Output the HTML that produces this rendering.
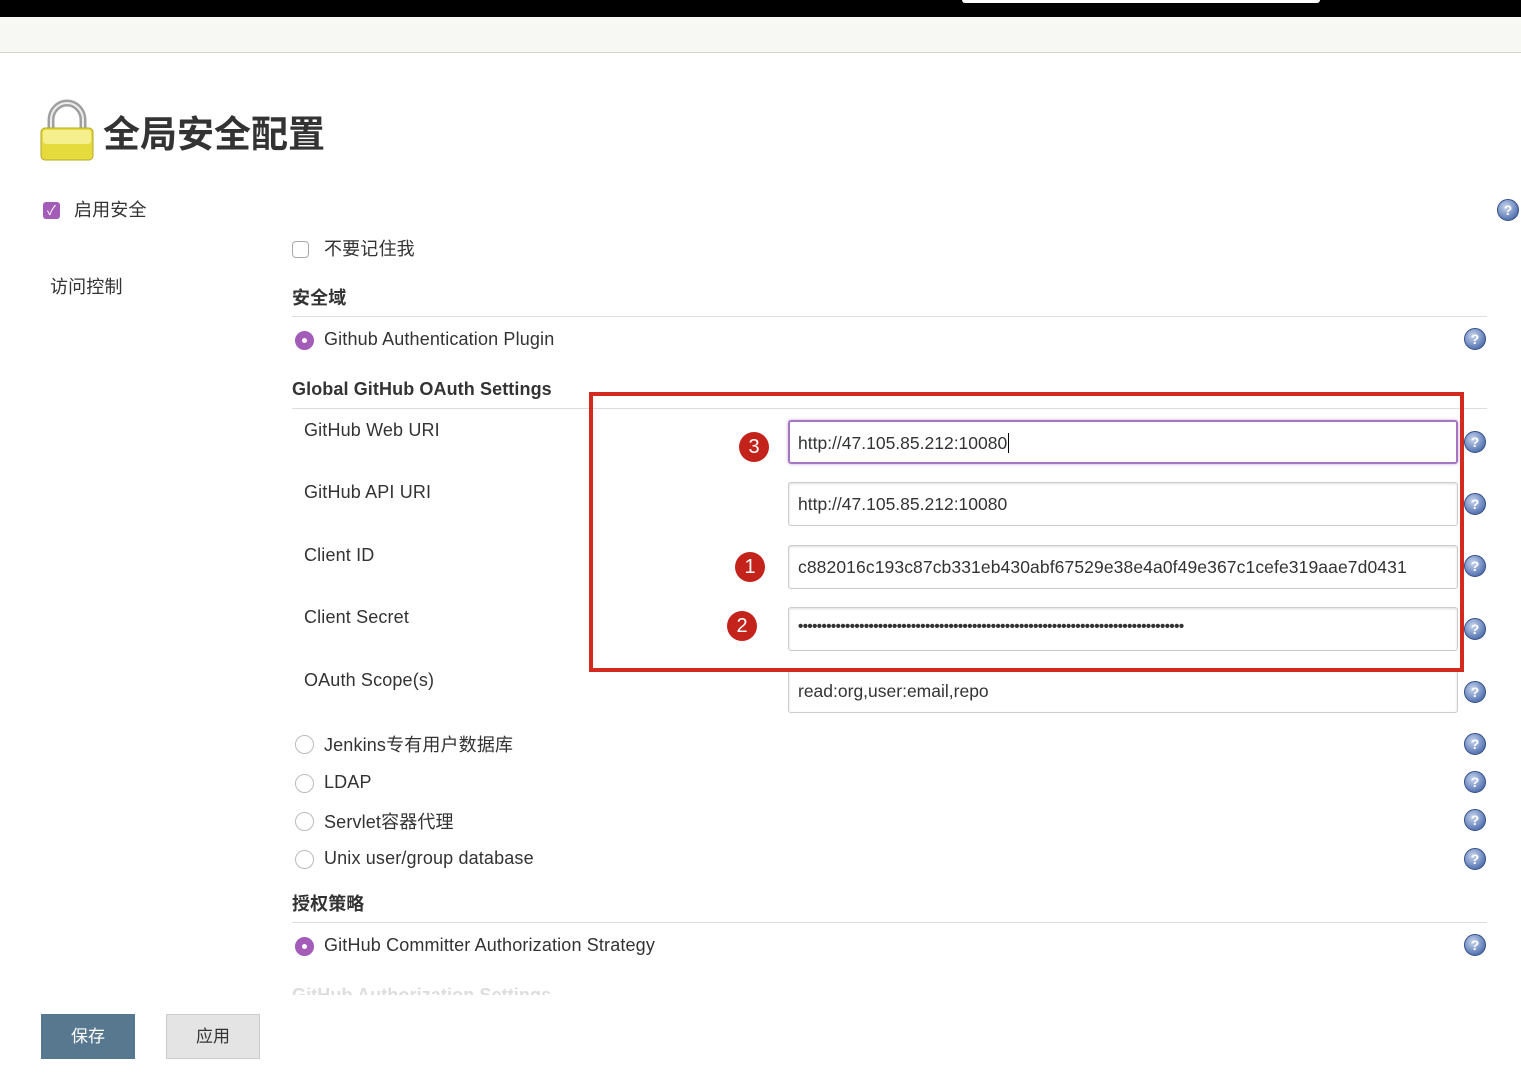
<!DOCTYPE html>
<html><head><meta charset="utf-8"><style>
*{margin:0;padding:0;box-sizing:border-box}
body{width:1521px;height:1080px;overflow:hidden;background:#fff;font-family:"Liberation Sans","Noto Sans CJK SC",sans-serif;color:#333;position:relative}
.a{position:absolute;white-space:nowrap}
.t{font-size:18px;letter-spacing:0.15px}
.h{font-size:18px;font-weight:bold;letter-spacing:0.1px}
.line{position:absolute;height:1px;background:#ddd}
.inp{position:absolute;left:788px;width:670px;height:44px;border:1px solid #ccc;border-radius:3px;font-size:17.5px;padding:11px 9px;box-shadow:inset 0 1px 2px #ddd}
.q{position:absolute;width:22px;height:22px;border-radius:50%;background:radial-gradient(circle at 40% 35%,#c8d6ee,#5a78b4 70%,#3a5590);border:1px solid #34508a;color:#fff;font:bold 14px "Liberation Sans",sans-serif;text-align:center;line-height:20px}
.rad{position:absolute;width:19px;height:19px;border-radius:50%;border:1px solid #bbb;background:#fff}
.rad.on{background:#a35cb8;border-color:#a35cb8}
.rad.on::after{content:"";position:absolute;left:6px;top:6px;width:5px;height:5px;border-radius:50%;background:#fff}
.num{position:absolute;width:30px;height:30px;border-radius:50%;background:#c4231c;color:#fff;font:20px "Liberation Sans",sans-serif;text-align:center;line-height:30px}
</style></head><body>
<div class="a" style="left:0;top:0;width:1521px;height:17px;background:#000"></div>
<div class="a" style="left:962px;top:0;width:358px;height:3px;background:#fff;border-radius:0 0 3px 3px"></div>
<div class="a" style="left:0;top:17px;width:1521px;height:36px;background:#f7f8f3;border-bottom:1px solid #d8d8d0"></div>

<svg class="a" style="left:36px;top:98px" width="62" height="66" viewBox="0 0 62 66">
<path d="M15 36 V22 a16 17 0 0 1 32 0 V36" fill="none" stroke="#a0a0a0" stroke-width="7"/>
<path d="M15 36 V22 a16 17 0 0 1 32 0 V36" fill="none" stroke="#eee" stroke-width="2"/>
<rect x="5" y="30" width="52" height="32" rx="4" fill="#e6db3c" stroke="#b5a82a"/>
<rect x="7" y="32" width="48" height="14" rx="3" fill="#f6ef8e"/>
</svg>
<div class="a" style="left:103px;top:104px;font-size:37px;font-weight:bold;color:#333">全局安全配置</div>

<div class="a" style="left:43px;top:202px;width:17px;height:17px;border-radius:3px;background:#a35cb8;color:#fff;font-size:13px;text-align:center;line-height:17px">✓</div>
<div class="a t" style="left:74px;top:196px">启用安全</div>
<div class="q" style="left:1497px;top:199px">?</div>

<div class="a" style="left:292px;top:241px;width:17px;height:17px;border-radius:4px;border:1px solid #aaa"></div>
<div class="a t" style="left:324px;top:235px">不要记住我</div>
<div class="a t" style="left:50px;top:273px">访问控制</div>

<div class="a h" style="left:292px;top:284px">安全域</div>
<div class="line" style="left:292px;top:316px;width:1195px"></div>
<div class="rad on" style="left:295px;top:331px"></div>
<div class="a t" style="left:324px;top:329px">Github Authentication Plugin</div>
<div class="q" style="left:1464px;top:328px">?</div>

<div class="a h" style="left:292px;top:379px">Global GitHub OAuth Settings</div>
<div class="line" style="left:292px;top:408px;width:1195px"></div>

<div class="a t" style="left:304px;top:420px">GitHub Web URI</div>
<div class="a t" style="left:304px;top:482px">GitHub API URI</div>
<div class="a t" style="left:304px;top:545px">Client ID</div>
<div class="a t" style="left:304px;top:607px">Client Secret</div>
<div class="a t" style="left:304px;top:670px">OAuth Scope(s)</div>

<div class="inp" style="top:420px;border:2px solid #a577c2;box-shadow:0 0 3px #c9a6dc;padding-left:8px">http://47.105.85.212:10080<span style="border-left:1px solid #000;margin-left:1px"></span></div>
<div class="inp" style="top:482px">http://47.105.85.212:10080</div>
<div class="inp" style="top:545px;letter-spacing:0.1px">c882016c193c87cb331eb430abf67529e38e4a0f49e367c1cefe319aae7d0431</div>
<div class="inp" style="top:607px;font-size:15px;font-weight:bold;padding-top:10px;letter-spacing:-0.55px">••••••••••••••••••••••••••••••••••••••••••••••••••••••••••••••••••••••••••••••••••</div>
<div class="inp" style="top:670px;height:43px;border-top:none">read:org,user:email,repo</div>

<div class="q" style="left:1464px;top:431px">?</div>
<div class="q" style="left:1464px;top:493px">?</div>
<div class="q" style="left:1464px;top:555px">?</div>
<div class="q" style="left:1464px;top:618px">?</div>
<div class="q" style="left:1464px;top:681px">?</div>

<div class="a" style="left:589px;top:392px;width:875px;height:280px;border:4px solid #d32a20"></div>
<div class="num" style="left:739px;top:432px">3</div>
<div class="num" style="left:735px;top:552px">1</div>
<div class="num" style="left:727px;top:611px">2</div>

<div class="rad" style="left:295px;top:735px"></div><div class="a t" style="left:324px;top:731px">Jenkins专有用户数据库</div><div class="q" style="left:1464px;top:733px">?</div>
<div class="rad" style="left:295px;top:774px"></div><div class="a t" style="left:324px;top:772px">LDAP</div><div class="q" style="left:1464px;top:771px">?</div>
<div class="rad" style="left:295px;top:812px"></div><div class="a t" style="left:324px;top:808px">Servlet容器代理</div><div class="q" style="left:1464px;top:809px">?</div>
<div class="rad" style="left:295px;top:850px"></div><div class="a t" style="left:324px;top:848px">Unix user/group database</div><div class="q" style="left:1464px;top:848px">?</div>

<div class="a h" style="left:292px;top:890px">授权策略</div>
<div class="line" style="left:292px;top:922px;width:1195px"></div>
<div class="rad on" style="left:295px;top:937px"></div>
<div class="a t" style="left:324px;top:935px">GitHub Committer Authorization Strategy</div>
<div class="q" style="left:1464px;top:934px">?</div>
<div class="a h" style="left:292px;top:985px;color:#ddd;height:10px;overflow:hidden">GitHub Authorization Settings</div>

<div class="a" style="left:41px;top:1014px;width:94px;height:45px;background:#587890;color:#fff;font-size:17px;text-align:center;line-height:45px">保存</div>
<div class="a" style="left:166px;top:1014px;width:94px;height:45px;background:#e4e4e4;border:1px solid #ccc;color:#333;font-size:17px;text-align:center;line-height:43px">应用</div>
</body></html>
